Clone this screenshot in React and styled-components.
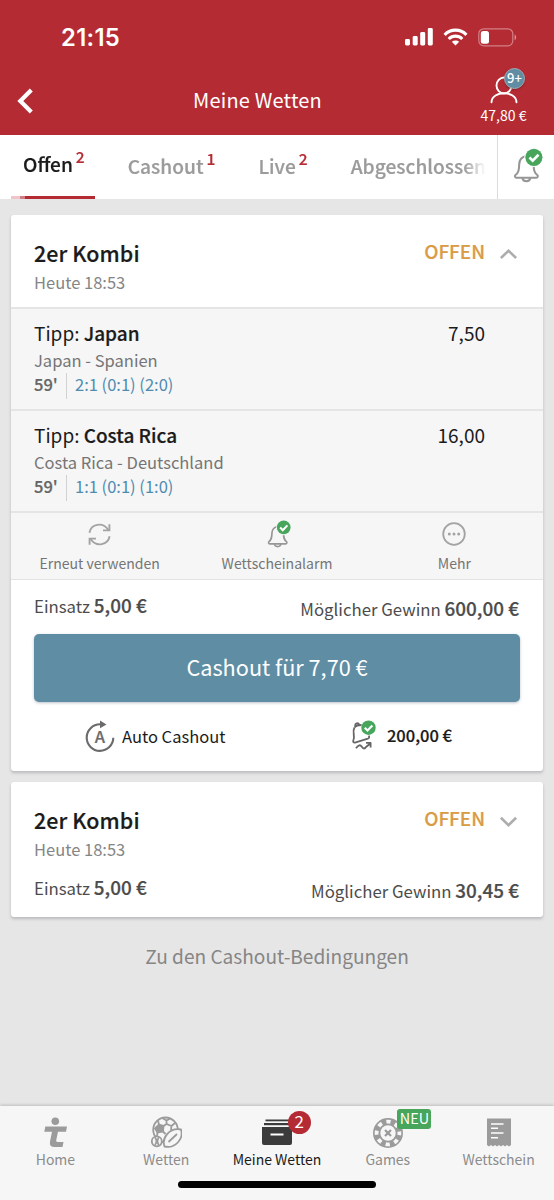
import React from 'react';
import styled, { createGlobalStyle, css } from 'styled-components';

const GlobalStyle = createGlobalStyle`
  *, *::before, *::after { box-sizing: border-box; }
  body {
    margin: 0;
    background: #e6e6e6;
    font-family: "Noto Sans CJK SC", "Noto Sans", sans-serif;
    color: #1b1b1b;
  }
  svg { display: block; }
`;

const colors = {
  red: '#b52b34',
  teal: '#5e8da4',
  green: '#47a65c',
  orange: '#d99c45',
  grey: '#9b9b9b',
};

/* Between medium and bold */
const semibold = css`
  font-weight: 500;
  -webkit-text-stroke: 0.22px currentColor;
`;

const Screen = styled.div`
  width: 554px;
  height: 1200px;
  display: flex;
  flex-direction: column;
  background: #e6e6e6;
  overflow: hidden;
  white-space: nowrap;
`;

/* Header */
const Header = styled.header`
  height: 135px;
  background: ${colors.red};
  color: #fff;
`;
const StatusBar = styled.div`
  height: 74px;
  padding: 0 37px 0 61px;
  display: flex;
  align-items: center;
  justify-content: space-between;
`;
const Clock = styled.span`
  font: 600 23.8px/28px Inter, sans-serif;
  letter-spacing: 0.3px;
  padding-top: 1px;
`;
const StatusIcons = styled.div`
  display: flex;
  align-items: center;
  gap: 10px;
`;
const TitleBar = styled.div`
  height: 61px;
  display: grid;
  grid-template-columns: 62px 1fr 101px;
`;
const BackButton = styled.div`
  padding: 14px 0 0 17px;
`;
const Title = styled.h1`
  margin: 0;
  font-size: 20px;
  font-weight: 400;
  line-height: 52.6px;
  letter-spacing: 0.2px;
  text-align: center;
`;
const Account = styled.div`
  display: flex;
  flex-direction: column;
  align-items: center;
  position: relative;
`;
const Balance = styled.span`
  font-size: 14px;
  line-height: 20px;
  margin-top: 1px;
`;
const CountBadge = styled.span`
  position: absolute;
  left: 51px;
  top: -6px;
  width: 21px;
  height: 21px;
  border-radius: 50%;
  border: 1px solid #a5a9b2;
  background: ${colors.teal};
  font-size: 13px;
  font-weight: 500;
  line-height: 17px;
  text-align: center;
  box-shadow: 0 1px 2px rgba(0, 0, 0, 0.25);
`;

/* Tabs */
const TabBar = styled.div`
  height: 64px;
  display: flex;
  background: #fff;
`;
const TabList = styled.div`
  width: 497px;
  padding-left: 11px;
  display: flex;
  gap: 20px;
  overflow: hidden;
  mask-image: linear-gradient(to right, #000 464px, transparent 486px);
`;
const Tab = styled.div`
  flex: none;
  height: 64px;
  padding: ${(p) => (p.$active ? '11px 10px 0 12px' : '13px 10px 0 13px')};
  display: flex;
  gap: 3px;
  font-size: ${(p) => (p.$active ? 19.1 : 19.2)}px;
  ${semibold}
  line-height: ${(p) => (p.$active ? 36 : 37)}px;
  color: ${(p) => (p.$active ? '#1b1b1b' : colors.grey)};
  background: ${(p) =>
    p.$active
      ? `linear-gradient(to right, #f0c4ca 9px, #cf7d86 9px 14px, ${colors.red} 14px) left bottom / 100% 3px no-repeat`
      : 'none'};
`;
const TabCount = styled.span`
  font-size: 15.5px;
  line-height: 21px;
  color: ${colors.red};
`;
const AlarmCell = styled.div`
  flex: 1;
  border-left: 1px solid #dcdcdc;
  padding: 13px 0 0 15px;
`;

/* Cards */
const Content = styled.main`
  flex: 1;
  padding: 16px 11px 0;
`;
const Card = styled.section`
  background: #fff;
  border-radius: 3px;
  box-shadow: 0 2px 3px rgba(60, 60, 80, 0.26);
  margin-bottom: 11px;
  height: ${(p) => p.$height}px;
`;
const CardHead = styled.div`
  height: ${(p) => (p.$expanded ? 92 : 80)}px;
  padding: 22px 25px 0 23px;
  display: flex;
  justify-content: space-between;
`;
const BetName = styled.h2`
  margin: 0;
  font-size: 21.4px;
  ${semibold}
  letter-spacing: 0.1px;
  line-height: 32px;
`;
const BetTime = styled.div`
  font-size: 16.5px;
  line-height: 26px;
  color: #858585;
`;
const StatusGroup = styled.div`
  display: flex;
  gap: 15px;
`;
const Status = styled.span`
  font-size: 18.9px;
  ${semibold}
  line-height: 27px;
  color: ${colors.orange};
`;
const ChevronSlot = styled.span`
  padding-top: 11px;
`;
const TipRow = styled.div`
  height: 102px;
  padding: 10px 58px 0 23px;
  display: flex;
  justify-content: space-between;
  background: #f6f6f6;
  border-top: 2px solid #e5e5e5;
`;
const TipName = styled.div`
  font-size: 19px;
  line-height: 28px;
  b { ${semibold} }
`;
const Match = styled.div`
  font-size: 16.55px;
  line-height: 26px;
  color: #757575;
`;
const LiveLine = styled.div`
  display: flex;
  font-size: 16.5px;
  line-height: 22px;
  color: #4e8bb0;
`;
const Minute = styled.span`
  width: 33px;
  height: 26px;
  margin-right: 8px;
  border-right: 1px solid #d2d2d2;
  ${semibold}
  color: #666;
`;
const Odds = styled.div`
  font-size: 19px;
  line-height: 28px;
`;
const Actions = styled.div`
  height: 69px;
  display: grid;
  grid-template-columns: repeat(3, 1fr);
  background: #f6f6f6;
  border-top: 2px solid #e5e5e5;
  border-bottom: 1px solid #e3e3e3;
`;
const Action = styled.div`
  display: flex;
  flex-direction: column;
  align-items: center;
  font-size: 14.05px;
  line-height: 22px;
  color: #757575;
`;
const ActionIcon = styled.div`
  height: 39px;
  padding-top: ${(p) => p.$top}px;
  padding-left: ${(p) => p.$left || 0}px;
`;
const Stakes = styled.div`
  height: ${(p) => p.$height}px;
  padding: 0 24px 0 23px;
  display: flex;
  justify-content: space-between;
  font-size: 16.8px;
  color: #4c4c4c;
  b { font-size: 18.9px; ${semibold} }
`;
const Stake = styled.div`
  line-height: 27px;
  padding-top: 11px;
`;
const Win = styled.div`
  line-height: 27px;
  padding-top: 14px;
`;
const CashoutButton = styled.div`
  height: 68px;
  margin: 0 23px;
  border-radius: 5px;
  background: ${colors.teal};
  box-shadow: 0 1px 3px rgba(60, 80, 100, 0.35);
  color: #fff;
  font-size: 21.7px;
  line-height: 65px;
  text-align: center;
`;
const CashoutOptions = styled.div`
  height: 68px;
  padding: 18px 91px 0 74px;
  display: flex;
  justify-content: space-between;
`;
const Option = styled.div`
  display: flex;
  gap: ${(p) => p.$gap}px;
  font-size: 16.5px;
  line-height: ${(p) => p.$line}px;
  ${(p) => p.$strong && semibold}
`;
const Terms = styled.div`
  font-size: 19.1px;
  line-height: 30px;
  text-align: center;
  margin-top: 24px;
  color: #858585;
`;

/* Bottom navigation */
const BottomNav = styled.nav`
  height: 94px;
  background: #f6f6f6;
  box-shadow: 0 -1px 3px rgba(0, 0, 0, 0.18);
`;
const NavItems = styled.div`
  height: 75px;
  display: grid;
  grid-template-columns: repeat(5, 1fr);
`;
const NavItem = styled.div`
  position: relative;
  display: flex;
  flex-direction: column;
  align-items: center;
  font-size: 14px;
  line-height: 21px;
  color: ${(p) => (p.$active ? '#1b1b1b' : '#8c8c8c')};
`;
const NavIcon = styled.div`
  height: 43px;
  padding-top: 10px;
`;
const pill = css`
  position: absolute;
  color: #fff;
  text-align: center;
`;
const NavCount = styled.span`
  ${pill}
  left: 66px;
  top: 5px;
  width: 23px;
  height: 23px;
  border-radius: 50%;
  background: ${colors.red};
  font-size: 17px;
  line-height: 19px;
`;
const NewTag = styled.span`
  ${pill}
  left: 65px;
  top: 3px;
  width: 34px;
  height: 20px;
  border-radius: 3px;
  background: ${colors.green};
  font-size: 14.4px;
  line-height: 17px;
`;
const HomeIndicator = styled.div`
  width: 198px;
  height: 7px;
  margin: 0 auto;
  border-radius: 4px;
  background: #000;
`;

/* Icons */
const SignalIcon = () => (
  <svg width="28" height="18" viewBox="0 0 28 18" fill="#fff">
    <rect x="0" y="11" width="5" height="6.5" rx="1.4" />
    <rect x="7.7" y="8" width="5" height="9.5" rx="1.4" />
    <rect x="15.2" y="4" width="5" height="13.5" rx="1.4" />
    <rect x="22.8" y="0" width="5" height="17.5" rx="1.4" />
  </svg>
);
const WifiIcon = () => (
  <svg width="25" height="18" viewBox="0 0 25 18" fill="none" stroke="#fff" strokeWidth="3.1">
    <path d="M1.6 6.8C7.8.6 17.2.6 23.4 6.8" />
    <path d="M5.7 11c4-3.8 9.6-3.8 13.6 0" />
    <path d="M8.8 13.8c2.2-1.9 5.2-1.9 7.4 0L12.5 17.4Z" fill="#fff" stroke="none" />
  </svg>
);
const BatteryIcon = () => (
  <svg width="39" height="19" viewBox="0 0 39 19">
    <rect x=".8" y=".8" width="34" height="17" rx="5" fill="none" stroke="#fff" strokeOpacity=".4" strokeWidth="1.2" />
    <rect x="2.8" y="3" width="8.2" height="12.8" rx="2.5" fill="#fff" />
    <path d="M36.6 6.5c2 1 2 4.8 0 5.8Z" fill="#fff" fillOpacity=".5" />
  </svg>
);
const BackIcon = () => (
  <svg width="17" height="26" viewBox="0 0 17 26" fill="none" stroke="#fff" strokeWidth="4.2">
    <path d="M14.3 2 3.3 13l11 11" />
  </svg>
);
const PersonIcon = () => (
  <svg width="28" height="30" viewBox="0 0 28 30" fill="none" stroke="#fff" strokeWidth="1.9" strokeLinecap="round">
    <ellipse cx="14" cy="11.5" rx="7.5" ry="8" />
    <path d="M1.5 28.3C1.8 16.3 26.2 16.3 26.5 28.3" />
  </svg>
);
const Check = ({ cx, cy, r }) => (
  <g>
    <circle cx={cx} cy={cy} r={r} fill={colors.green} />
    <path
      d={`M${cx - r * 0.52} ${cy + r * 0.02}l${r * 0.38} ${r * 0.38} ${r * 0.68}-${r * 0.7}`}
      fill="none"
      stroke="#fff"
      strokeWidth={r * 0.3}
    />
  </g>
);
const BellIcon = ({ size, halo = '#fff' }) => (
  <svg width={size} height={size * 1.25} viewBox="0 0 28 35">
    <g fill="none" stroke="#969696" strokeWidth="1.9">
      <path d="M12 7.5c-4.6 1-6 4-6.2 7.5-.2 5.300-.4 7.800-3.500 10.200-.9.800-.5 2.600.9 2.600h18.600c1.400 0 1.800-1.800.9-2.600-3.100-2.400-3.300-4.900-3.500-10.200" />
      <path d="M8.800 28c.5 4 6.800 4 7.300 0" />
    </g>
    <circle cx="19.5" cy="8.7" r="9" fill={halo} />
    <Check cx={19.5} cy={8.7} r={8} />
  </svg>
);
const RepeatIcon = () => (
  <svg width="23" height="23" viewBox="0 0 23 23" fill="none" stroke="#a3a3a3" strokeWidth="1.9">
    <path d="M1.4 9.7C3 1.2 14.5-1.8 20.4 7" />
    <path d="M21.4 1.2V7.4H15" />
    <path d="M21.6 13.3C20 21.8 8.5 24.8 2.6 16" />
    <path d="M1.6 21.8V15.6H8" />
  </svg>
);
const MoreIcon = () => (
  <svg width="24" height="24" viewBox="0 0 24 24" fill="#a3a3a3">
    <circle cx="12" cy="12" r="10.8" fill="none" stroke="#a3a3a3" strokeWidth="1.8" />
    <circle cx="7.3" cy="12" r="1.5" />
    <circle cx="12" cy="12" r="1.5" />
    <circle cx="16.7" cy="12" r="1.5" />
  </svg>
);
const Chevron = ({ up }) => (
  <svg width="18" height="12" viewBox="0 0 18 12" fill="none" stroke="#adadad" strokeWidth="2.6">
    <path d={up ? 'M.9 10 8.500 2.700l7.600 7.300' : 'M.9 2.800 8.500 10.100 16.100 2.800'} />
  </svg>
);
const AutoIcon = () => (
  <svg width="30" height="33" viewBox="0 0 30 33">
    <path d="M16.5 4.3H15A13.3 13.3 0 1 0 28.3 17.8" fill="none" stroke="#6b6b6b" strokeWidth="2.1" />
    <path d="M15 .5 21.5 4.4 15 8.2Z" fill="#6b6b6b" />
    <text x="15" y="23.3" textAnchor="middle" fontSize="16.500" fontWeight="500" stroke="#6b6b6b" strokeWidth=".2" fill="#6b6b6b">A</text>
  </svg>
);
const TrendBellIcon = () => (
  <svg width="26" height="31" viewBox="0 0 26 31">
    <g fill="none" stroke="#666" strokeWidth="1.8" strokeLinejoin="round">
      <path d="M3.5 7.5C.8 12 4.5 15.5 2.3 20.500c-.5 1.400.4 2.400 1.700 2.100l12.800-3.900c1.500-.5 1.900-2 .8-3" />
      <path d="M3.5 7.5C4.5 6 7.5 5 10.500 5M4.300 6.500C3.500 2.500 7.500 2.500 8.300 5" />
      <path d="M5 28.300c2.600-3.800 4.300-3.800 5.800-1.500s3 2.200 4.200.2l4.300-3.500M15 22.900h4.600v4.600" />
    </g>
    <Check cx={17.5} cy={7.7} r={7.2} />
  </svg>
);
const LogoIcon = () => (
  <svg width="24" height="32" viewBox="0 0 24 32" fill={colors.grey}>
    <circle cx="12.3" cy="5.2" r="3.8" />
    <path d="M2.3 10.500H24L23 15.700H15L13.200 24.200Q12.800 26 14.500 26H20.500L19.500 31H11.500Q6 31 7 25.500L9 15.700H1.300Z" />
  </svg>
);
const BallsIcon = () => (
  <svg width="31" height="32" viewBox="0 0 31 32" fill="none" stroke={colors.grey} strokeWidth="1.8">
    <circle cx="14.5" cy="13.8" r="12.3" />
    <path d="M8 8.500 12.500 10 12 15.500 6.500 16.500 4 12.500Z" fill={colors.grey} />
    <path d="M12 2.500 15.500 4.500 19 2.800M15.500 4.500 15.500 8 12.500 10M15.500 8 20.500 10 24 7M20.500 10 20 14M12 15.500 14.500 18M6.500 16.500 6 20M8 8.500 7 5" />
    <g fill="#f6f6f6">
      <path d="M13.500 30.500C10.500 22 18 11.500 30 13.500 33 23 24 33 13.500 30.500Z" />
      <circle cx="5.8" cy="25.3" r="5" />
    </g>
    <path d="M17.500 26 26 18M4 21.500c2 2.500 2 5 0 7.500M7.800 21.500c-1.800 2.500-1.800 5 0 7.500" />
  </svg>
);
const DrawerIcon = () => (
  <svg width="30" height="32" viewBox="0 0 30 32" fill="#3b3b3b">
    <rect x="3.5" y="3.5" width="24" height="1.8" />
    <rect x="2" y="7" width="27" height="2.2" />
    <path d="M0 11H30V27a2 2 0 0 1-2 2H2a2 2 0 0 1-2-2Z" />
    <rect x="8.5" y="17.5" width="13" height="2" fill="#fff" />
  </svg>
);
const ChipIcon = () => (
  <svg width="30" height="32" viewBox="0 0 30 32">
    <circle cx="15" cy="17" r="15" fill={colors.grey} />
    <circle cx="15" cy="17" r="11.4" fill="none" stroke="#f6f6f6" strokeWidth="3.8" strokeDasharray="4.3 4.65" strokeDashoffset="2" />
    <circle cx="15" cy="17" r="7.7" fill="#f6f6f6" />
    <path d="m12 14 6 6M18 14l-6 6" stroke={colors.grey} strokeWidth="2.2" />
    <circle cx="15" cy="17" r="1.8" fill={colors.grey} />
  </svg>
);
const SlipIcon = () => (
  <svg width="24" height="32" viewBox="0 0 24 32">
    <path d="M0 2.500H24V29L22 30.500 20 29 18 30.500 16 29 14 30.500 12 29 10 30.500 8 29 6 30.500 4 29 2 30.500 0 29Z" fill={colors.grey} />
    <path d="M4 8h12.500M4 12.300h7M4 17h12.500M4 21.800h7" stroke="#fff" strokeWidth="1.5" />
  </svg>
);

const tabs = [
  { label: 'Offen', count: 2, active: true },
  { label: 'Cashout', count: 1 },
  { label: 'Live', count: 2 },
  { label: 'Abgeschlossen' },
];
const tips = [
  { name: 'Japan', match: 'Japan - Spanien', score: '2:1 (0:1) (2:0)', odds: '7,50' },
  { name: 'Costa Rica', match: 'Costa Rica - Deutschland', score: '1:1 (0:1) (1:0)', odds: '16,00' },
];
const actions = [
  { label: 'Erneut verwenden', icon: <RepeatIcon />, top: 10 },
  { label: 'Wettscheinalarm', icon: <BellIcon size={24} halo="#f6f6f6" />, top: 7, left: 5 },
  { label: 'Mehr', icon: <MoreIcon />, top: 9 },
];
const navItems = [
  { label: 'Home', icon: <LogoIcon /> },
  { label: 'Wetten', icon: <BallsIcon /> },
  { label: 'Meine Wetten', icon: <DrawerIcon />, active: true, extra: <NavCount>2</NavCount> },
  { label: 'Games', icon: <ChipIcon />, extra: <NewTag>NEU</NewTag> },
  { label: 'Wettschein', icon: <SlipIcon /> },
];

const BetHead = ({ expanded }) => (
  <CardHead $expanded={expanded}>
    <div>
      <BetName>2er Kombi</BetName>
      <BetTime>Heute 18:53</BetTime>
    </div>
    <StatusGroup>
      <Status>OFFEN</Status>
      <ChevronSlot><Chevron up={expanded} /></ChevronSlot>
    </StatusGroup>
  </CardHead>
);
const BetStakes = ({ win, height }) => (
  <Stakes $height={height}>
    <Stake>Einsatz <b>5,00 €</b></Stake>
    <Win>Möglicher Gewinn <b>{win}</b></Win>
  </Stakes>
);

export default function App() {
  return (
    <Screen>
      <GlobalStyle />
      <Header>
        <StatusBar>
          <Clock>21:15</Clock>
          <StatusIcons><SignalIcon /><WifiIcon /><BatteryIcon /></StatusIcons>
        </StatusBar>
        <TitleBar>
          <BackButton><BackIcon /></BackButton>
          <Title>Meine Wetten</Title>
          <Account>
            <PersonIcon />
            <Balance>47,80 €</Balance>
            <CountBadge>9+</CountBadge>
          </Account>
        </TitleBar>
      </Header>
      <TabBar>
        <TabList>
          {tabs.map((t) => (
            <Tab key={t.label} $active={t.active}>
              {t.label}
              {t.count && <TabCount>{t.count}</TabCount>}
            </Tab>
          ))}
        </TabList>
        <AlarmCell><BellIcon size={30} /></AlarmCell>
      </TabBar>
      <Content>
        <Card $height={556}>
          <BetHead expanded />
          {tips.map((t) => (
            <TipRow key={t.name}>
              <div>
                <TipName>Tipp: <b>{t.name}</b></TipName>
                <Match>{t.match}</Match>
                <LiveLine><Minute>59'</Minute>{t.score}</LiveLine>
              </div>
              <Odds>{t.odds}</Odds>
            </TipRow>
          ))}
          <Actions>
            {actions.map((a) => (
              <Action key={a.label}>
                <ActionIcon $top={a.top} $left={a.left}>{a.icon}</ActionIcon>
                {a.label}
              </Action>
            ))}
          </Actions>
          <BetStakes win="600,00 €" height={54} />
          <CashoutButton>Cashout für 7,70 €</CashoutButton>
          <CashoutOptions>
            <Option $gap={7} $line={33}><AutoIcon />Auto Cashout</Option>
            <Option $gap={10} $line={31} $strong><TrendBellIcon />200,00 €</Option>
          </CashoutOptions>
        </Card>
        <Card $height={135}>
          <BetHead />
          <BetStakes win="30,45 €" height={55} />
        </Card>
        <Terms>Zu den Cashout-Bedingungen</Terms>
      </Content>
      <BottomNav>
        <NavItems>
          {navItems.map((n) => (
            <NavItem key={n.label} $active={n.active}>
              <NavIcon>{n.icon}</NavIcon>
              {n.label}
              {n.extra}
            </NavItem>
          ))}
        </NavItems>
        <HomeIndicator />
      </BottomNav>
    </Screen>
  );
}
